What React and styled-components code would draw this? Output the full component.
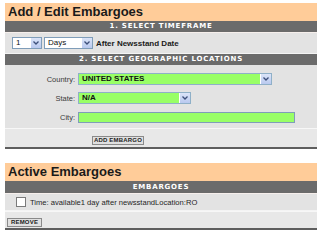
import React from 'react'
import styled, { createGlobalStyle } from 'styled-components'

const Global = createGlobalStyle`
  body{
    margin: 0;
    background: #fff;
    font-family: "Liberation Sans", Arial, sans-serif;
  }
`

const Page = styled.div`
  padding: 3px 0 0 5px;
  width: 312px;
`

const Panel = styled.section`
  width: 312px;
  border-bottom: 2px solid #5e5e5e;
  margin-bottom: ${p => p.$gap || 0}px;
`

const Title = styled.h2`
  margin: 0;
  height: ${p => p.$h || 18}px;
  line-height: ${p => p.$h || 18}px;
  padding-left: 3px;
  background: #ffcc99;
  font-size: 13px;
  font-weight: bold;
  color: #1a1a1a;
`

const Bar = styled.div`
  height: ${p => p.$h || 11}px;
  line-height: ${p => p.$h || 11}px;
  background: #6b6b6b;
  color: #fff;
  text-align: center;
  font-size: 7px;
  font-weight: bold;
  letter-spacing: 0.8px;
  font-family: "DejaVu Sans", Verdana, sans-serif;
`

const Row = styled.div`
  display: flex;
  align-items: center;
  gap: ${p => p.$gap || 2}px;
  height: ${p => p.$h || 20}px;
  padding-left: ${p => p.$pad || 7}px;
  background: #e3e3e3;
  border-top: 1px solid #f6efec;
  border-bottom: 1px solid #f4f4f4;
`

const Select = styled.div`
  display: flex;
  align-items: stretch;
  width: ${p => p.$w}px;
  height: ${p => p.$h || 12}px;
  box-sizing: border-box;
  border: 1px solid ${p => (p.$green ? '#8fb0c8' : '#7f9db9')};
  background: ${p => (p.$green ? '#99ff66' : '#fff')};
`

const SelectValue = styled.span`
  flex: 1;
  padding-left: 3px;
  font-size: 8px;
  line-height: 10px;
  font-weight: ${p => (p.$bold ? 'bold' : 'normal')};
  color: #111;
  white-space: nowrap;
  overflow: hidden;
`

const Arrow = styled.span`
  width: 10px;
  margin: 0;
  display: flex;
  align-items: center;
  justify-content: center;
  background: linear-gradient(#dbe4f8, #b9c9ef);
  border-left: 1px solid #fff;
  svg{
    width: 6px;
    height: 4px;
  }
`

const Strong = styled.span`
  font-size: 8px;
  font-weight: bold;
  color: #1a1a1a;
  margin-left: 1px;
`

const Form = styled.div`
  display: grid;
  grid-template-columns: 70px 1fr;
  grid-auto-rows: 12px;
  column-gap: 3px;
  row-gap: 7px;
  align-items: center;
  padding: 8px 0 5px;
  background: #e3e3e3;
`

const Label = styled.label`
  text-align: right;
  font-size: 7.5px;
  color: #3a3a3a;
`

const Input = styled.div`
  width: ${p => p.$w}px;
  height: 11px;
  box-sizing: border-box;
  border: 1px solid #7f9db9;
  background: #99ff66;
`

const Actions = styled.div`
  display: flex;
  align-items: flex-start;
  height: ${p => p.$h || 19}px;
  padding-top: ${p => p.$top || 7}px;
  padding-left: ${p => p.$left}px;
  box-sizing: border-box;
  background: #e8e8e8;
  border-top: 1px solid #f7f7f7;
`

const Button = styled.button`
  height: ${p => p.$h || 9}px;
  width: ${p => p.$w}px;
  padding: 0;
  border: 1px solid #8a8a8a;
  background: #e0e0e0;
  font-family: "Liberation Sans", Arial, sans-serif;
  font-size: 6px;
  font-weight: bold;
  letter-spacing: 0.2px;
  line-height: 7px;
  color: #222;
`

const Check = styled.span`
  width: 10px;
  height: 10px;
  box-sizing: border-box;
  border: 1px solid #7a7a7a;
  background: #fff;
`

const Text = styled.span`
  font-size: 7.6px;
  color: #1f1f1f;
`

function Chevron() {
  return (
    <svg viewBox="0 0 6 4">
      <path d="M0.5 0.5 L3 3 L5.5 0.5" fill="none" stroke="#3d4f7a" strokeWidth="1.3" />
    </svg>
  )
}

function Dropdown({ value, width, green, bold }) {
  return (
    <Select $w={width} $green={green}>
      <SelectValue $bold={bold}>{value}</SelectValue>
      <Arrow><Chevron /></Arrow>
    </Select>
  )
}

export default function App() {
  return (
    <Page>
      <Global />
      <Panel $gap={14}>
        <Title>Add / Edit Embargoes</Title>
        <Bar>1. SELECT TIMEFRAME</Bar>
        <Row>
          <Dropdown value="1" width={30} />
          <Dropdown value="Days" width={49} />
          <Strong>After Newsstand Date</Strong>
        </Row>
        <Bar>2. SELECT GEOGRAPHIC LOCATIONS</Bar>
        <Form>
          <Label>Country:</Label>
          <Dropdown value="UNITED STATES" width={194} green bold />
          <Label>State:</Label>
          <Dropdown value="N/A" width={113} green bold />
          <Label>City:</Label>
          <Input $w={217} />
        </Form>
        <Actions $left={87}>
          <Button $w={52}>ADD EMBARGO</Button>
        </Actions>
      </Panel>
      <Panel>
        <Title>Active Embargoes</Title>
        <Bar $h={12}>EMBARGOES</Bar>
        <Row $h={16} $pad={11} $gap={4}>
          <Check />
          <Text>Time: available1 day after newsstandLocation:RO</Text>
        </Row>
        <Actions $h={17} $top={6} $left={2}>
          <Button $w={35}>REMOVE</Button>
        </Actions>
      </Panel>
    </Page>
  )
}
